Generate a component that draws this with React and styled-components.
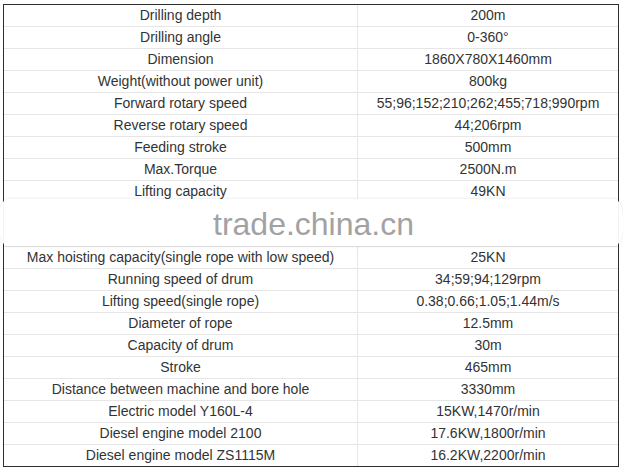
import React from 'react';
import styled, { createGlobalStyle } from 'styled-components';

const GlobalStyle = createGlobalStyle`
  html, body {
    margin: 0;
    padding: 0;
    background: #fff;
  }
`;

const topRows = [
  ['Drilling depth', '200m'],
  ['Drilling angle', '0-360°'],
  ['Dimension', '1860X780X1460mm'],
  ['Weight(without power unit)', '800kg'],
  ['Forward rotary speed', '55;96;152;210;262;455;718;990rpm'],
  ['Reverse rotary speed', '44;206rpm'],
  ['Feeding stroke', '500mm'],
  ['Max.Torque', '2500N.m'],
  ['Lifting capacity', '49KN'],
];

const bottomRows = [
  ['Max hoisting capacity(single rope with low speed)', '25KN'],
  ['Running speed of drum', '34;59;94;129rpm'],
  ['Lifting speed(single rope)', '0.38;0.66;1.05;1.44m/s'],
  ['Diameter of rope', '12.5mm'],
  ['Capacity of drum', '30m'],
  ['Stroke', '465mm'],
  ['Distance between machine and bore hole', '3330mm'],
  ['Electric model Y160L-4', '15KW,1470r/min'],
  ['Diesel engine model 2100', '17.6KW,1800r/min'],
  ['Diesel engine model ZS1115M', '16.2KW,2200r/min'],
];

export default function App() {
  return (
    <Page>
      <GlobalStyle />
      <Frame>
        {topRows.map(([label, value], i) =>
          <Row key={label} first={i === 0}>
            <Cell>{label}</Cell>
            <ValueCell>{value}</ValueCell>
          </Row>
        )}
        <GapRow />
        {bottomRows.map(([label, value]) =>
          <Row key={label}>
            <Cell>{label}</Cell>
            <ValueCell>{value}</ValueCell>
          </Row>
        )}
        <Watermark>trade.china.cn</Watermark>
      </Frame>
    </Page>
  );
}

const Page = styled.div`
  padding: 4px 0 0 3px;
  font-family: "Liberation Sans", Arial, sans-serif;
`;

const Frame = styled.div`
  position: relative;
  width: 614px;
  border: 1px solid #2e2e2e;
  display: flex;
  flex-direction: column;
`;

const Row = styled.div`
  display: grid;
  grid-template-columns: 353px 1fr;
  height: 21px;
  border-top: ${props => props.first ? 'none' : '1px solid #e6e6e6'};
`;

const Cell = styled.div`
  font-size: 14px;
  line-height: 21px;
  color: #333;
  text-align: center;
  white-space: nowrap;
`;

const ValueCell = styled(Cell)`
  border-left: 1px solid #e6e6e6;
`;

const GapRow = styled.div`
  height: 43px;
  border-top: 1px solid #e6e6e6;
`;

const Watermark = styled.div`
  position: absolute;
  top: 194px;
  left: -5px;
  right: -5px;
  height: 47px;
  padding: 3px 0 0 5px;
  box-sizing: border-box;
  background: rgba(255, 255, 255, 0.94);
  border-radius: 8px / 23px;
  box-shadow: 0 0 3px rgba(0, 0, 0, 0.12);
  font-size: 32px;
  line-height: 44px;
  color: #a2a2a2;
  text-align: center;
`;
